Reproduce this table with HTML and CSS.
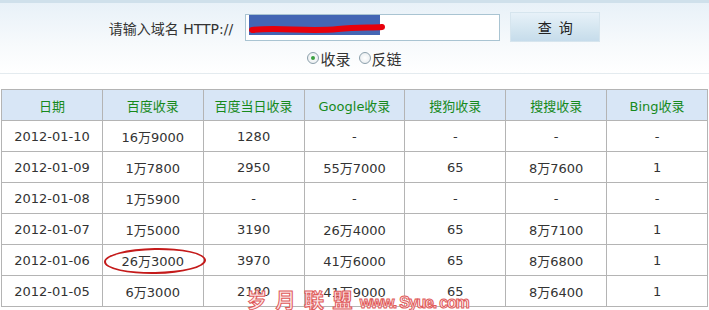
FILE: index.html
```html
<!DOCTYPE html>
<html lang="zh-CN">
<head>
<meta charset="utf-8">
<title>收录查询</title>
<link rel="stylesheet" href="styles.css">
</head>
<body>
<div class="topbar"></div>
<div class="search">
  <form class="search-row">
    <label class="label">请输入域名 HTTP://</label>
    <div class="input">
      <span class="sel"></span>
      <svg class="scribble" width="140" height="14" viewBox="0 0 140 14"><path d="M4 9 C30 6 60 11 90 8 C110 6 125 7 134 6" stroke="#e8000b" stroke-width="6" fill="none" stroke-linecap="round"/></svg>
    </div>
    <button type="button" class="btn">查 询</button>
  </form>
  <div class="radios">
    <span class="radio on"></span><span class="rtext">收录</span>
    <span class="radio"></span><span class="rtext">反链</span>
  </div>
</div>
<div class="tablewrap">
<table class="data">
  <thead>
    <tr><th>日期</th><th>百度收录</th><th>百度当日收录</th><th>Google收录</th><th>搜狗收录</th><th>搜搜收录</th><th>Bing收录</th></tr>
  </thead>
  <tbody>
    <tr><td>2012-01-10</td><td>16万9000</td><td>1280</td><td>-</td><td>-</td><td>-</td><td>-</td></tr>
    <tr><td>2012-01-09</td><td>1万7800</td><td>2950</td><td>55万7000</td><td>65</td><td>8万7600</td><td>1</td></tr>
    <tr><td>2012-01-08</td><td>1万5900</td><td>-</td><td>-</td><td>-</td><td>-</td><td>-</td></tr>
    <tr><td>2012-01-07</td><td>1万5000</td><td>3190</td><td>26万4000</td><td>65</td><td>8万7100</td><td>1</td></tr>
    <tr><td>2012-01-06</td><td class="circled">26万3000</td><td>3970</td><td>41万6000</td><td>65</td><td>8万6800</td><td>1</td></tr>
    <tr><td>2012-01-05</td><td>6万3000</td><td>2180</td><td>41万9000</td><td>65</td><td>8万6400</td><td>1</td></tr>
  </tbody>
</table>
<div class="watermark"><span class="wm-cn">岁 月 联 盟</span><span class="wm-en">www. Syue. com</span></div>
</div>
</body>
</html>
```
FILE: styles.css
```css
html, body {
  margin: 0;
  padding: 0;
  background: #fff;
  overflow: hidden;
  height: 310px;
}
body {
  font-family: "DejaVu Sans", "Noto Sans CJK SC", sans-serif;
  color: #333;
}
.topbar {
  height: 3px;
  background: #cfe0eb;
}
.search {
  height: 71px;
  background: linear-gradient(to bottom, #e8f1f8 0%, #f7fafc 60%, #ffffff 100%);
  border-bottom: 1px solid #e4ebef;
  box-sizing: border-box;
}
.search-row {
  margin: 0;
  display: flex;
  justify-content: center;
  align-items: center;
  padding-top: 9px;
  height: 30px;
}
.label {
  font-family: "DejaVu Sans", "Noto Sans CJK SC", sans-serif;
  font-size: 14px;
  color: #333;
  margin-right: 12px;
  margin-top: 1px;
}
.input {
  position: relative;
  width: 253px;
  height: 25px;
  border: 1px solid #a9c4d2;
  background: #fff;
  margin-right: 10px;
}
.sel {
  display: block;
  position: absolute;
  left: 3px;
  top: 0;
  width: 131px;
  height: 20px;
  background: #4466b4;
}
.scribble {
  position: absolute;
  left: 2px;
  top: 6px;
}
.btn {
  width: 90px;
  height: 30px;
  border: 1px solid #d6e5ee;
  background: linear-gradient(to bottom, #e7f1f8 0%, #d6e7f1 50%, #c6dceb 100%);
  font-family: "Noto Sans CJK SC", sans-serif;
  font-size: 14px;
  letter-spacing: 2px;
  color: #222;
  padding: 0 0 0 2px;
  margin-top: -1px;
}
.radios {
  display: flex;
  justify-content: center;
  align-items: center;
  margin-top: 6px;
  font-family: "Noto Sans CJK SC", sans-serif;
  font-size: 15px;
  color: #333;
  height: 20px;
}
.radio {
  display: inline-block;
  box-sizing: border-box;
  width: 12px;
  height: 12px;
  border-radius: 50%;
  border: 1px solid #8ca0ac;
  background: radial-gradient(circle, #ffffff 0%, #e4e9ec 100%);
  margin-right: 1px;
  position: relative;
}
.radio.on::after {
  content: "";
  position: absolute;
  left: 3px;
  top: 3px;
  width: 4px;
  height: 4px;
  border-radius: 50%;
  background: #3aa040;
}
.rtext {
  margin-right: 8px;
}
.rtext:last-child {
  margin-right: 0;
}
.tablewrap {
  position: relative;
  padding: 15px 0 0 1px;
}
.data {
  border-collapse: collapse;
  width: 707px;
  table-layout: fixed;
  font-size: 13px;
}
.data th, .data td {
  border: 1px solid #b4b4b4;
  text-align: center;
  height: 31px;
  padding: 0;
  box-sizing: border-box;
}
.data th {
  background: #d8e6f6;
  color: #178a1c;
  font-weight: normal;
  font-family: "DejaVu Sans", "Noto Sans CJK SC", sans-serif;
}
.data td {
  color: #333;
}
.circled {
  position: relative;
}
.circled::before {
  content: "";
  position: absolute;
  left: 1px;
  top: 3px;
  width: 102px;
  height: 26px;
  border: 2px solid #c41a1a;
  border-radius: 50%;
  transform: rotate(-1deg);
  box-sizing: border-box;
}
.watermark {
  position: absolute;
  left: 247px;
  top: 211px;
  display: flex;
  align-items: baseline;
  gap: 5px;
  color: #fde8e8;
  -webkit-text-stroke: 1px #e05a5a;
  font-weight: bold;
}
.wm-cn {
  font-family: "Noto Sans CJK SC", sans-serif;
  font-size: 20px;
  letter-spacing: 2px;
}
.wm-en {
  font-family: "Liberation Sans", sans-serif;
  font-size: 16px;
  letter-spacing: -1.2px;
}
```
